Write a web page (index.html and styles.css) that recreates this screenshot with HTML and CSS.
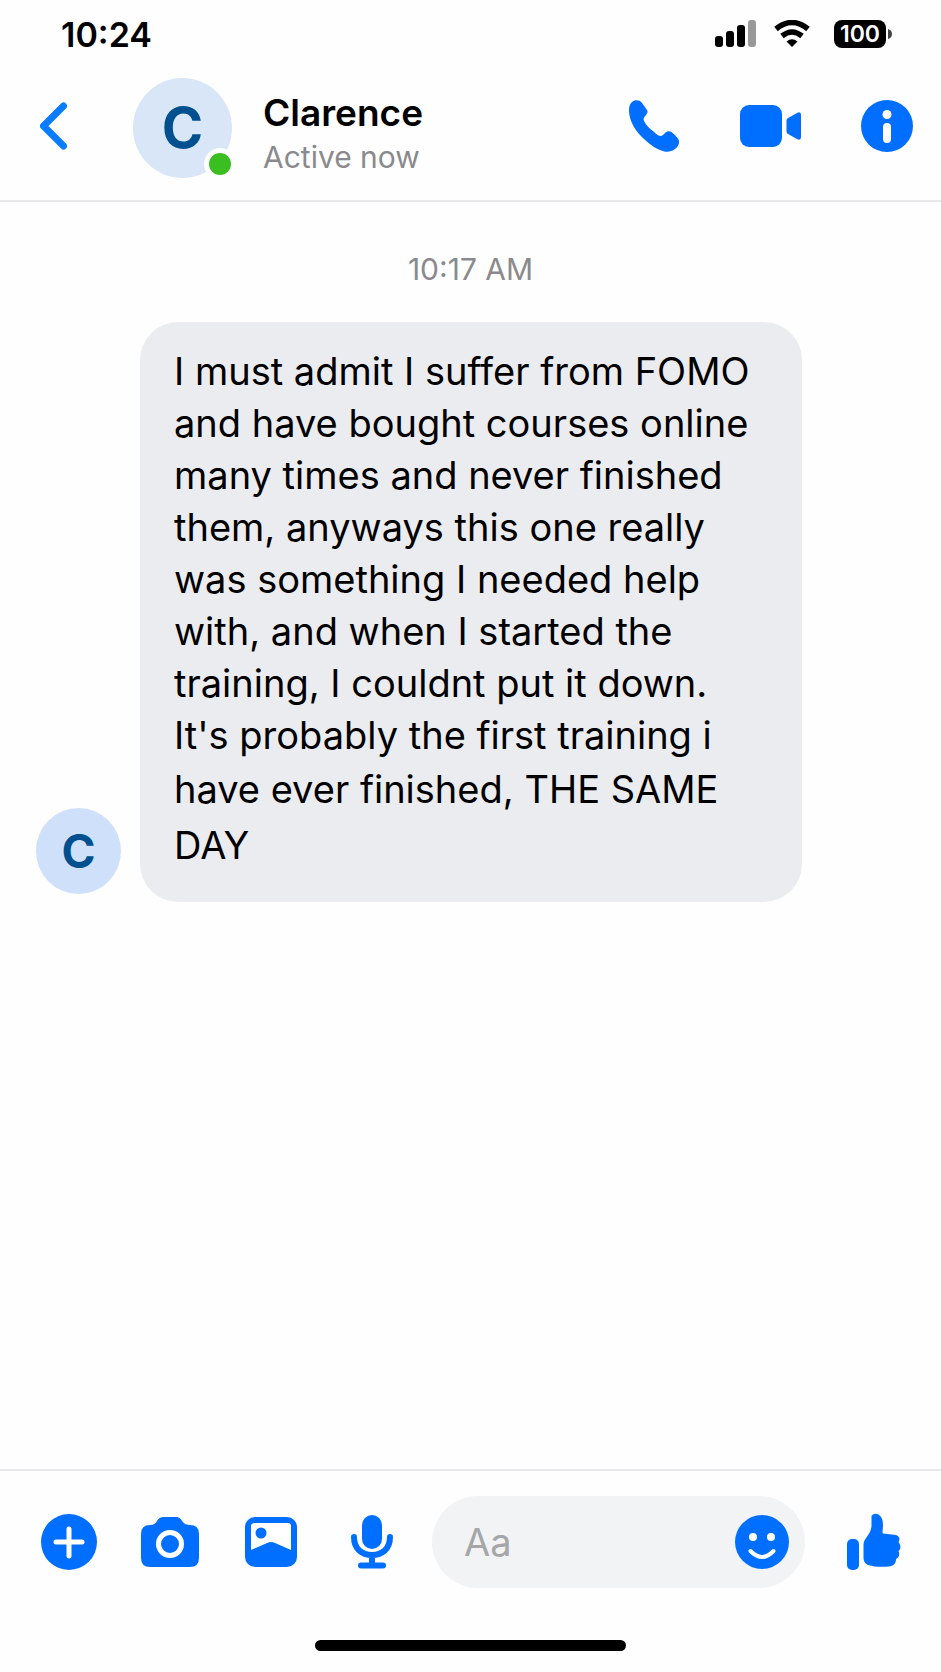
FILE: index.html
```html
<!DOCTYPE html>
<html lang="en">
<head>
    <meta charset="UTF-8">
    <meta name="viewport" content="width=device-width, initial-scale=1">
    <title>Clarence</title>
    <link rel="stylesheet" href="styles.css">
</head>
<body>
    <div class="status-bar">
        <span class="clock">10:24</span>
        <div class="status-icons">
            <svg class="signal" width="41" height="28" viewBox="0 0 41 28">
                <rect x="0" y="16" width="8" height="11" rx="3"/>
                <rect x="11" y="11" width="8" height="16" rx="3"/>
                <rect x="22" y="5" width="8" height="22" rx="3"/>
                <rect x="33" y="0" width="8" height="27" rx="3" fill="#999"/>
            </svg>
            <svg class="wifi" width="36" height="28" viewBox="0 0 36 28">
                <path d="M2 9Q18 -4 34 9M8 16Q18 8 28 16" fill="none" stroke="#000" stroke-width="5.500"/>
                <path d="M12.500 21.500Q18 17 23.500 21.500L18 27Z"/>
            </svg>
            <div class="battery">
                <span class="battery-level">100</span>
                <svg width="5" height="10" viewBox="0 0 5 10"><path d="M0 0Q4 1 4 5T0 10Z" fill="#444"/></svg>
            </div>
        </div>
    </div>

    <header class="chat-header">
        <button class="icon-button back" aria-label="Back">
            <svg width="28" height="48" viewBox="0 0 28 48"><path d="M23.500 4L3.500 24L23.500 44" fill="none" stroke="#0a7cff" stroke-width="7" stroke-linecap="round" stroke-linejoin="round"/></svg>
        </button>
        <div class="avatar avatar-large">C<span class="online-dot"></span></div>
        <div class="contact">
            <h1 class="contact-name">Clarence</h1>
            <p class="contact-status">Active now</p>
        </div>
        <div class="header-actions">
            <button class="icon-button" aria-label="Call">
                <svg width="51" height="52" viewBox="0 0 51 52"><path d="M0 10.500C0 6 1 4 3 2C5 0 8 -.5 11 1C13 2.500 16 7 18 10C19 12 18.500 13 17 15C15 17.500 14 18.500 15 21C17 25 20 28 24.500 31.500C27 34 30 36 31.500 36C33.500 36 35 34 36.500 32.500C38.500 31 40.500 31 42.500 32C45 34 48 37 49.500 39.500C51 43 49.500 46 46 49C43 51.500 39 52 35.500 51.500C29 50 21 45 14.500 38.500C7 32 0 21 0 10.500Z"/></svg>
            </button>
            <button class="icon-button" aria-label="Video call">
                <svg width="61" height="42" viewBox="0 0 61 42"><rect width="42" height="42" rx="9"/><path d="M46.500 15.500Q46.500 14 48 13L57 8Q61 6 61 10V32Q61 36 57 34L48 29Q46.500 28 46.500 26.500Z"/></svg>
            </button>
            <button class="icon-button" aria-label="Information">
                <svg width="52" height="52" viewBox="0 0 52 52"><circle cx="26" cy="26" r="26"/><circle cx="26" cy="14.500" r="4.500" fill="#fff"/><rect x="22" y="23" width="8" height="20" rx="4" fill="#fff"/></svg>
            </button>
        </div>
    </header>

    <main class="conversation">
        <time class="timestamp">10:17 AM</time>
        <div class="message-row">
            <div class="avatar avatar-small">C</div>
            <p class="message">I must admit I suffer from FOMO and have bought courses online many times and never finished them, anyways this one really was something I needed help with, and when I started the training, I couldnt put it down. It's probably the first training i <span class="message-end">have ever finished, THE SAME DAY</span></p>
        </div>
    </main>

    <footer class="composer">
        <div class="composer-row">
            <div class="tools">
                <button class="icon-button" aria-label="More">
                    <svg width="56" height="56" viewBox="0 0 56 56"><circle cx="28" cy="28" r="28"/><path d="M28 15V42M15 28H41" stroke="#fff" stroke-width="5" stroke-linecap="round"/></svg>
                </button>
                <button class="icon-button" aria-label="Camera">
                    <svg width="58" height="50" viewBox="0 0 58 50"><path d="M9 8C13 8 15 6 16 4Q18 0 23 0H35Q39 0 41 4C43 7 46 8 49 8Q58 8 58 17V41Q58 50 49 50H9Q0 50 0 41V17Q0 8 9 8Z"/><circle cx="29" cy="27" r="11.500" fill="none" stroke="#fff" stroke-width="5"/></svg>
                </button>
                <button class="icon-button" aria-label="Photo">
                    <svg width="52" height="50" viewBox="0 0 52 50"><rect width="52" height="50" rx="10"/><path d="M10 6H43Q46 6 46 9V33L30 26Q26 24 22 26L6 33V9Q6 6 10 6Z" fill="#fff"/><circle cx="16" cy="16" r="5.500"/></svg>
                </button>
                <button class="icon-button" aria-label="Voice message">
                    <svg class="mic" width="42" height="54" viewBox="0 0 42 54"><rect x="11" width="20" height="34" rx="10"/><path d="M3 22C3 34 11 40 21 40S39 34 39 22M21 40V50M10 50.500H32" fill="none" stroke-width="6" stroke-linecap="round"/></svg>
                </button>
            </div>
            <div class="message-box">
                <input class="message-input" type="text" placeholder="Aa" aria-label="Message">
                <button class="icon-button" aria-label="Emoji">
                    <svg width="54" height="54" viewBox="0 0 54 54"><circle cx="27" cy="27" r="27"/><circle cx="18" cy="22" r="4" fill="#fff"/><circle cx="36" cy="22" r="4" fill="#fff"/><path d="M15.500 36Q27 48 38.500 36" fill="none" stroke="#fff" stroke-width="4" stroke-linecap="round"/></svg>
                </button>
            </div>
            <button class="icon-button" aria-label="Like">
                <svg width="54" height="59" viewBox="0 0 54 59"><rect y="26" width="12" height="31" rx="5"/><path d="M24.500 3C26 -1 36 -1 36 12C36 16 35 20 36 20.500L49 22C53 23 53 27 51.500 29C54 32 54 36 51.500 38C53 41 52 45 49 46C49 51 46 53 42 53.500C35 54 27 54 21 52Q16.500 50 16.500 45V32C16.500 25 24 22 24.500 13Z"/></svg>
            </button>
        </div>
        <div class="home-indicator"></div>
    </footer>
</body>
</html>
```
FILE: styles.css
```css
:root {
    --blue: #006fff;
    --line: #e8e8ea;
    --grey: #8a8a8e;
}

* {
    box-sizing: border-box;
}

body {
    margin: 0;
    min-height: 100vh;
    display: flex;
    flex-direction: column;
    background: #fefefe;
    color: #000;
    font-family: Inter, "Liberation Sans", sans-serif;
}

svg {
    display: block;
}

.icon-button {
    padding: 0;
    border: 0;
    background: none;
    cursor: pointer;
    flex-shrink: 0;
}

.icon-button svg {
    fill: var(--blue);
}

/* Status bar */
.status-bar {
    display: flex;
    justify-content: space-between;
    align-items: center;
    height: 68px;
    padding: 0 48px 0 61px;
}

.clock {
    font-size: 34px;
    font-weight: 600;
}

.status-icons {
    display: flex;
    align-items: center;
    gap: 18px;
}

.battery {
    display: flex;
    align-items: center;
    gap: 2px;
    margin-left: 6px;
}

.battery-level {
    width: 52px;
    border-radius: 8px;
    background: #000;
    color: #fff;
    font-size: 23px;
    line-height: 28px;
    font-weight: 600;
    text-align: center;
}

/* Header */
.chat-header {
    display: flex;
    align-items: center;
    height: 134px;
    padding: 0 28px 16px 40px;
    border-bottom: 2px solid var(--line);
}

.avatar {
    display: flex;
    justify-content: center;
    align-items: center;
    flex-shrink: 0;
    border-radius: 50%;
    color: #00508f;
    font-weight: 700;
}

.avatar-large {
    position: relative;
    width: 99px;
    height: 100px;
    margin: 4px 31px 0 65px;
    background: #d9e6f7;
    font-size: 56px;
}

.avatar-small {
    width: 85px;
    height: 86px;
    margin-bottom: 8px;
    background: #cfe0fa;
    font-size: 46px;
}

.online-dot {
    position: absolute;
    right: -4px;
    bottom: -2px;
    width: 32px;
    height: 32px;
    border: 5px solid #fefefe;
    border-radius: 50%;
    background: #3bbf20;
}

.contact {
    flex: 1;
    padding-top: 18px;
}

.contact-name {
    margin: 0;
    font-size: 37px;
    line-height: 44px;
    font-weight: 600;
}

.contact-status {
    margin: 0;
    color: var(--grey);
    font-size: 30px;
    line-height: 44px;
}

.header-actions {
    display: flex;
    align-items: center;
    gap: 60px;
}

/* Conversation */
.conversation {
    flex: 1;
    padding: 49px 36px 40px;
}

.timestamp {
    display: block;
    margin-bottom: 35px;
    color: var(--grey);
    font-size: 30px;
    line-height: 36px;
    text-align: center;
}

.message-row {
    display: flex;
    align-items: flex-end;
    gap: 19px;
}

.message {
    max-width: 662px;
    margin: 0;
    padding: 23px 34px 29px;
    border-radius: 38px;
    background: #ebecef;
    font-size: 38px;
    line-height: 52px;
}

.message-end {
    line-height: 56px;
}

/* Composer */
.composer {
    border-top: 2px solid var(--line);
}

.composer-row {
    display: flex;
    align-items: center;
    padding: 25px 40px 0;
}

.tools {
    display: flex;
    align-items: center;
    gap: 43px;
}

.tools .icon-button {
    display: flex;
    justify-content: center;
    width: 58px;
}

.mic {
    stroke: var(--blue);
}

.mic rect {
    stroke: none;
}

.message-box {
    display: flex;
    align-items: center;
    flex: 1;
    min-width: 0;
    height: 92px;
    margin: 0 42px 0 31px;
    padding: 0 16px 0 32px;
    border-radius: 46px;
    background: #f2f3f5;
}

.message-input {
    flex: 1;
    width: 100%;
    min-width: 0;
    padding: 0;
    border: 0;
    outline: 0;
    background: none;
    font-family: inherit;
    font-size: 38px;
}

.message-input::placeholder {
    color: #a5a6a8;
}

.home-indicator {
    width: 33%;
    height: 11px;
    margin: 52px auto 21px;
    border-radius: 6px;
    background: #000;
}
```
